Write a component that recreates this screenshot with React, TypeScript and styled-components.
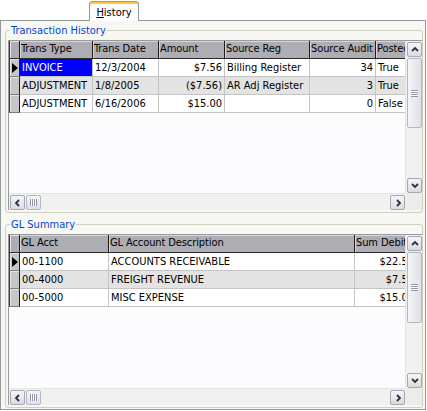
import React from 'react';
import styled, { createGlobalStyle } from 'styled-components';

const GlobalStyle = createGlobalStyle`
  html, body {
    margin: 0;
    padding: 0;
    background: #ffffff;
  }
  body {
    font-family: "DejaVu Sans Condensed", "DejaVu Sans", sans-serif;
    font-stretch: condensed;
    font-size: 11px;
    color: #000000;
  }
`;

const Window = styled.div`
  width: 427px;
  height: 411px;
  display: flex;
  flex-direction: column;
  overflow: hidden;
`;

const TabStrip = styled.div`
  height: 20px;
  display: flex;
  align-items: flex-end;
  padding-left: 89px;
`;

const Tab = styled.div`
  position: relative;
  z-index: 1;
  width: 50px;
  height: 20px;
  margin-bottom: -1px;
  box-sizing: border-box;
  border: 1px solid #919b9c;
  border-top: 1px solid #e68b2c;
  border-bottom: none;
  border-radius: 3px 3px 0 0;
  box-shadow: inset 0 2px 0 #ffc73c;
  background: #fcfcfe;
  display: flex;
  align-items: center;
  justify-content: center;
  padding-top: 2px;

  u {
    text-decoration: underline;
  }
`;

const Panel = styled.div`
  width: 426px;
  height: 390px;
  box-sizing: border-box;
  border: 1px solid #919b9c;
  background: #f7f7f4;
  padding: 3px 2px 0 4px;
  display: flex;
  flex-direction: column;
  gap: 5px;
`;

const GroupBox = styled.fieldset`
  margin: 0;
  padding: 3px 0 2px 2px;
  border: 1px solid #d0d0bf;
  border-radius: 3px;
  min-width: 0;
`;

const Legend = styled.legend`
  color: #0046d5;
  padding: 0 1px;
  margin-left: 2px;
  line-height: 13px;
`;

const Grid = styled.div<{ $height: number }>`
  height: ${p => p.$height}px;
  box-sizing: border-box;
  border-left: 1px solid #9a9a9a;
  border-top: 1px solid #9a9a9a;
  display: grid;
  grid-template-columns: 1fr 17px;
  grid-template-rows: 1fr 17px;
  background: #fcfcfe;
`;

const Viewport = styled.div`
  overflow: hidden;
  background: #fcfcfe;
`;

const Row = styled.div<{ $alt?: boolean }>`
  display: flex;
  height: 18px;
  background: ${p => (p.$alt ? '#e3e3e3' : '#ffffff')};
`;

const HeaderRow = styled.div`
  display: flex;
  height: 18px;
`;

const HeaderCell = styled.div<{ $w: number }>`
  flex: 0 0 ${p => p.$w}px;
  box-sizing: border-box;
  height: 18px;
  line-height: 16px;
  padding-left: 1px;
  letter-spacing: -0.1px;
  background: #adadb3;
  border-right: 1px solid #1c1c1c;
  border-bottom: 1px solid #2a2a2a;
  box-shadow: inset 1px 1px 0 #d6d6da;
  white-space: nowrap;
  overflow: hidden;
`;

const Cell = styled.div<{ $w: number; $right?: boolean; $selected?: boolean }>`
  flex: 0 0 ${p => p.$w}px;
  box-sizing: border-box;
  height: 18px;
  line-height: 17px;
  padding: 0 2px;
  text-align: ${p => (p.$right ? 'right' : 'left')};
  border-right: 1px solid #c4c4c4;
  border-bottom: 1px solid #c4c4c4;
  white-space: nowrap;
  overflow: hidden;
  background: ${p => (p.$selected ? '#0000f6' : 'transparent')};
  color: ${p => (p.$selected ? '#ffffff' : '#000000')};
`;

const Selector = styled.div`
  flex: 0 0 11px;
  box-sizing: border-box;
  height: 18px;
  background: #c6c6ca;
  border-left: 1px solid #3a3a3a;
  border-right: 1px solid #1c1c1c;
  border-bottom: 1px solid #7c7c80;
  box-shadow: inset 1px 1px 0 #e6e6e8;
  display: flex;
  align-items: center;
  justify-content: center;
`;

const SelectorHeader = styled(Selector)`
  background: #adadb3;
  border-bottom: 1px solid #2a2a2a;
`;

const VTrack = styled.div`
  display: flex;
  flex-direction: column;
  background: #f1f1ef;
  border-left: 1px solid #e4e4e2;
`;

const HTrack = styled.div`
  display: flex;
  background: #f1f1ef;
  border-top: 1px solid #e4e4e2;
`;

const TrackFill = styled.div`
  flex: 1;
`;

const Corner = styled.div`
  background: #ececea;
`;

const ArrowButton = styled.div`
  flex: 0 0 15px;
  width: 15px;
  height: 15px;
  margin: 1px 0 0 1px;
  box-sizing: border-box;
  border: 1px solid #a3a8b4;
  border-radius: 2px;
  background: linear-gradient(#f6f6f8, #d9dbe0);
  display: flex;
  align-items: center;
  justify-content: center;
`;

const VThumb = styled.div`
  width: 15px;
  margin: 1px 0 0 1px;
  box-sizing: border-box;
  border: 1px solid #b4b8c4;
  border-radius: 2px;
  background: linear-gradient(90deg, #f4f5f8, #dfe1e7);
  display: flex;
  align-items: center;
  justify-content: center;
`;

const HThumb = styled.div`
  width: 15px;
  height: 15px;
  margin: 1px 0 0 1px;
  box-sizing: border-box;
  border: 1px solid #b4b8c4;
  border-radius: 2px;
  background: linear-gradient(#f4f5f8, #dfe1e7);
  display: flex;
  align-items: center;
  justify-content: center;
`;

const VGrip = styled.span`
  width: 7px;
  height: 7px;
  background: repeating-linear-gradient(#8f96a6 0 1px, #ffffff 1px 2px);
`;

const HGrip = styled.span`
  width: 7px;
  height: 7px;
  background: repeating-linear-gradient(90deg, #8f96a6 0 1px, #ffffff 1px 2px);
`;

type Dir = 'up' | 'down' | 'left' | 'right';

const chevrons: Record<Dir, string> = {
  up: '1,5 4,2 7,5',
  down: '1,2 4,5 7,2',
  left: '5,1 2,4 5,7',
  right: '3,1 6,4 3,7',
};

const Arrow = ({ dir }: { dir: Dir }) => (
  <ArrowButton>
    <svg width="8" height="8" viewBox="0 0 8 8">
      <polyline points={chevrons[dir]} fill="none" stroke="#2b3240" strokeWidth="1.8" />
    </svg>
  </ArrowButton>
);

const RowPointer = () => (
  <svg width="6" height="10" viewBox="0 0 6 10">
    <polygon points="0,0 6,5 0,10" fill="#000000" />
  </svg>
);

type Column = { title: string; width: number; right?: boolean };

type DataGridProps = {
  columns: Column[];
  rows: string[][];
  height: number;
  thumb: number;
  selected?: { row: number; col: number };
};

function DataGrid({ columns, rows, height, thumb, selected }: DataGridProps) {
  return (
    <Grid $height={height}>
      <Viewport>
        <HeaderRow>
          <SelectorHeader />
          {columns.map(c => (
            <HeaderCell key={c.title} $w={c.width}>
              {c.title}
            </HeaderCell>
          ))}
        </HeaderRow>
        {rows.map((row, r) => (
          <Row key={r} $alt={r % 2 === 1}>
            <Selector>{r === 0 && <RowPointer />}</Selector>
            {row.map((value, c) => (
              <Cell
                key={c}
                $w={columns[c].width}
                $right={columns[c].right}
                $selected={selected?.row === r && selected?.col === c}
              >
                {value}
              </Cell>
            ))}
          </Row>
        ))}
      </Viewport>
      <VTrack>
        <Arrow dir="up" />
        <VThumb style={{ height: thumb }}>
          <VGrip />
        </VThumb>
        <TrackFill />
        <Arrow dir="down" />
      </VTrack>
      <HTrack>
        <Arrow dir="left" />
        <HThumb>
          <HGrip />
        </HThumb>
        <TrackFill />
        <Arrow dir="right" />
      </HTrack>
      <Corner />
    </Grid>
  );
}

const historyColumns: Column[] = [
  { title: 'Trans Type', width: 73 },
  { title: 'Trans Date', width: 66 },
  { title: 'Amount', width: 66, right: true },
  { title: 'Source Reg', width: 85 },
  { title: 'Source Audit', width: 66, right: true },
  { title: 'Posted', width: 50 },
];

const historyRows = [
  ['INVOICE', '12/3/2004', '$7.56', 'Billing Register', '34', 'True'],
  ['ADJUSTMENT', '1/8/2005', '($7.56)', 'AR Adj Register', '3', 'True'],
  ['ADJUSTMENT', '6/16/2006', '$15.00', '', '0', 'False'],
];

const glColumns: Column[] = [
  { title: 'GL Acct', width: 89 },
  { title: 'GL Account Description', width: 246 },
  { title: 'Sum Debit', width: 62, right: true },
];

const glRows = [
  ['00-1100', 'ACCOUNTS RECEIVABLE', '$22.56'],
  ['00-4000', 'FREIGHT REVENUE', '$7.56'],
  ['00-5000', 'MISC EXPENSE', '$15.00'],
];

export default function App() {
  return (
    <>
      <GlobalStyle />
      <Window>
        <TabStrip>
          <Tab>
            <span>
              <u>H</u>istory
            </span>
          </Tab>
        </TabStrip>
        <Panel>
          <GroupBox>
            <Legend>Transaction History</Legend>
            <DataGrid
              columns={historyColumns}
              rows={historyRows}
              height={170}
              thumb={70}
              selected={{ row: 0, col: 0 }}
            />
          </GroupBox>
          <GroupBox>
            <Legend>GL Summary</Legend>
            <DataGrid columns={glColumns} rows={glRows} height={171} thumb={71} />
          </GroupBox>
        </Panel>
      </Window>
    </>
  );
}
